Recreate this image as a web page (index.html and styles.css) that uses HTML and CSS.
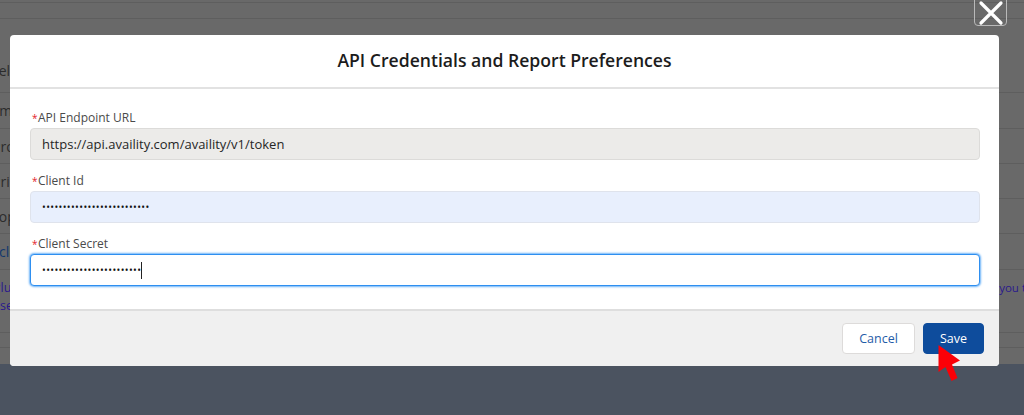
FILE: index.html
```html
<!DOCTYPE html>
<html lang="en">
<head>
<meta charset="utf-8">
<title>API Credentials and Report Preferences</title>
<link rel="stylesheet" href="styles.css">
</head>
<body>
<div class="page">
  <div class="backdrop">
    <div class="row row-a"></div>
    <div class="row row-b"></div>
    <div class="row row-c"><span class="snip snip-el">Label</span></div>
    <div class="row row-d"><span class="snip snip-m">Name</span></div>
    <div class="row row-d2"><span class="snip snip-ro">Pro</span></div>
    <div class="row row-d2"><span class="snip snip-ic">Pric</span></div>
    <div class="row row-d2"><span class="snip snip-op">Top</span></div>
    <div class="row row-e"><span class="snip snip-cl link">click</span></div>
    <div class="row row-f">
      <div class="para-line"><span class="snip snip-lu">Plu</span><span class="para-end">you t</span></div>
      <div class="para-line"><span class="snip snip-se">Use</span></div>
    </div>
    <div class="row row-g"></div>
    <div class="row row-h"></div>
  </div>
  <div class="footer-band"></div>

  <button class="close" type="button" aria-label="Close">
    <svg class="close-icon" viewBox="0 0 26 26" width="26" height="26" aria-hidden="true">
      <path d="M3 3 L23 23 M23 3 L3 23"></path>
    </svg>
  </button>

  <section class="modal">
    <header class="modal-head">
      <h2 class="modal-title">API Credentials and Report Preferences</h2>
    </header>
    <div class="modal-body">
      <div class="field">
        <div class="label"><span class="req">*</span>API Endpoint URL</div>
        <div class="input input-readonly">https://api.availity.com/availity/v1/token</div>
      </div>
      <div class="field">
        <div class="label"><span class="req">*</span>Client Id</div>
        <div class="input input-filled"><span class="dots">••••••••••••••••••••••••••</span></div>
      </div>
      <div class="field">
        <div class="label"><span class="req">*</span>Client Secret</div>
        <div class="input input-focus"><span class="dots">••••••••••••••••••••••••</span><span class="caret"></span></div>
      </div>
    </div>
    <footer class="modal-foot">
      <button class="btn btn-cancel" type="button">Cancel</button>
      <button class="btn btn-save" type="button">Save</button>
    </footer>
  </section>

  <svg class="arrow" viewBox="0 0 30 45" width="30" height="45" aria-hidden="true">
    <polygon points="8.5,5 30,20.5 22,24.5 27.5,38 21.5,41 15.5,27 8.5,32"></polygon>
  </svg>
</div>
</body>
</html>
```

FILE: styles.css
```css
* { box-sizing: border-box; }
html, body { margin: 0; padding: 0; }
body { font-family: "Open Sans", "Noto Sans", sans-serif; background: #4b5360; overflow: hidden; }
.page { position: relative; width: 1024px; height: 415px; overflow: hidden; display: flex; flex-direction: column; }
.backdrop { height: 364px; background: #696969; display: flex; flex-direction: column; flex: none; }
.footer-band { flex: 1; background: #4b5360; }
.row { border-bottom: 1px solid #5e5e5e; display: flex; align-items: center; flex: none; overflow: hidden; font-size: 14px; color: #2c2c2c; }
.row-a { height: 3px; }
.row-b { height: 16px; }
.row-c { height: 74px; align-items: flex-end; padding-bottom: 12px; }
.row-d { height: 36px; }
.row-d2 { height: 35px; }
.row-e { height: 36px; }
.row-f { height: 63px; flex-direction: column; align-items: stretch; justify-content: flex-start; padding-top: 9px; font-size: 12.5px; color: #2a1a8c; }
.row-g { height: 15px; }
.row-h { height: 17px; border-bottom: 0; }
.snip { display: block; white-space: nowrap; }
.snip-el { margin-left: -25px; }
.snip-m { margin-left: -19px; }
.snip-ro { margin-left: -8px; }
.snip-ic { margin-left: -8px; }
.snip-op { margin-left: -9px; }
.snip-cl { margin-left: -1px; }
.link { color: #12386e; }
.snip-lu { margin-left: -7px; }
.snip-se { margin-left: -9px; }
.para-line { display: flex; justify-content: space-between; height: 18px; line-height: 18px; }
.para-end { margin-right: -2px; font-size: 11.5px; }

.close { position: absolute; left: 974px; top: -8px; width: 33px; height: 34px; padding: 0; background: transparent; border: 1px solid #b9b9b9; border-radius: 4px; display: flex; align-items: center; justify-content: center; }
.close-icon { fill: none; stroke: #fff; stroke-width: 3.2; stroke-linecap: round; margin-top: 8px; }

.modal { position: absolute; left: 10px; top: 35px; width: 989px; height: 331px; background: #fff; border-radius: 4px; overflow: hidden; display: flex; flex-direction: column; }
.modal-head { height: 54px; flex: none; border-bottom: 2px solid #e2e2e2; display: flex; align-items: center; justify-content: center; }
.modal-title { margin: 0 0 3px; font-size: 17.6px; font-weight: 600; color: #1c1c1c; line-height: 24px; }
.modal-body { flex: 1; padding: 16px 19px 0 20px; display: flex; flex-direction: column; gap: 4px; }
.field { display: flex; flex-direction: column; height: 59px; }
.label { height: 23px; padding-top: 2px; display: flex; align-items: center; font-size: 12px; color: #4a4a4a; }
.req { color: #e3222b; width: 8px; padding-left: 2px; font-size: 10px; }
.input { height: 32px; flex: none; border-radius: 4px; border: 1px solid #dcdbd9; padding: 0 11px; display: flex; align-items: center; font-size: 13px; color: #262626; }
.input-readonly { background: #ecebe9; padding-bottom: 1px; }
.input-filled { background: #e8effd; border-color: #dfe3ec; color: #111; padding-bottom: 1px; }
.input-focus { background: #fff; border: 1px solid #2e8ff0; box-shadow: 0 0 2px 1px #6db3f8; color: #111; }
.dots { font-size: 10px; letter-spacing: 0.38px; line-height: 1; }
.caret { width: 1px; height: 17px; background: #222; }
.modal-foot { height: 57px; flex: none; background: #f0f0f0; border-top: 2px solid #dedede; display: flex; align-items: center; justify-content: flex-end; gap: 8px; padding: 0 15px 1px 0; }
.btn { height: 31px; border-radius: 4px; font-family: inherit; font-size: 12.5px; font-weight: 400; padding: 0; }
.btn-cancel { width: 73px; background: #fff; border: 1px solid #dddbda; color: #1f5ca8; }
.btn-save { width: 61px; background: #0e4c9c; border: 1px solid #0e4c9c; color: #fff; font-weight: 500; }

.arrow { position: absolute; left: 930px; top: 340px; fill: #fb0007; }
```
